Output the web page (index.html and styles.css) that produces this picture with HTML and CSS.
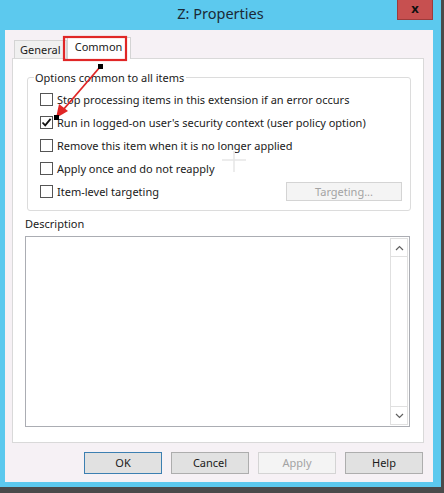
FILE: index.html
```html
<!DOCTYPE html>
<html lang="en">
<head>
  <meta charset="UTF-8">
  <title>Z: Properties</title>
  <link rel="stylesheet" href="styles.css">
</head>
<body>
  <div class="window">
    <div class="titlebar">
      <span class="title">Z: Properties</span>
      <div class="close">x</div>
    </div>

    <div class="client">
      <div class="tabs">
        <div class="tab">General</div>
        <div class="tab selected">Common</div>
      </div>

      <div class="panel">
        <fieldset class="group">
          <legend>Options common to all items</legend>
          <div class="option"><span class="check"></span><span>Stop processing items in this extension if an error occurs</span></div>
          <div class="option">
            <span class="check">
              <svg width="11" height="11" viewBox="0 0 11 11"><path d="M1.5 5.5 L4.2 8.3 L9.6 1.8" fill="none" stroke="#111" stroke-width="1.8"/></svg>
            </span>
            <span>Run in logged-on user's security context (user policy option)</span>
          </div>
          <div class="option"><span class="check"></span><span>Remove this item when it is no longer applied</span></div>
          <div class="option"><span class="check"></span><span>Apply once and do not reapply</span></div>
          <div class="option">
            <span class="check"></span><span>Item-level targeting</span>
            <div class="btn disabled targeting">Targeting...</div>
          </div>
        </fieldset>

        <div class="desc-label">Description</div>
        <div class="desc-box">
          <div class="scrollbar">
            <div class="arrow">
              <svg width="9" height="6" viewBox="0 0 9 6"><polyline points="1,5 4.5,1.5 8,5" fill="none" stroke="#606060" stroke-width="1.2"/></svg>
            </div>
            <div class="arrow">
              <svg width="9" height="6" viewBox="0 0 9 6"><polyline points="1,1 4.5,4.5 8,1" fill="none" stroke="#606060" stroke-width="1.2"/></svg>
            </div>
          </div>
        </div>
      </div>

      <div class="buttons">
        <div class="btn default">OK</div>
        <div class="btn">Cancel</div>
        <div class="btn disabled">Apply</div>
        <div class="btn">Help</div>
      </div>
    </div>

    <!-- callout drawn over the dialog -->
    <svg class="annotation" width="441" height="487" viewBox="0 0 441 487">
      <path d="M234 151 V172 M222 160 H246" stroke="#e6e6e6" stroke-width="1.5"/>
      <rect x="64" y="37" width="62" height="23" fill="none" stroke="#e02626" stroke-width="2.2"/>
      <line x1="100" y1="67" x2="63" y2="110" stroke="#e02626" stroke-width="1.8"/>
      <polygon points="56,118 59,104 68,111" fill="#e02626"/>
      <rect x="98" y="64" width="5" height="5" fill="#000"/>
      <rect x="54" y="115" width="5" height="5" fill="#000"/>
    </svg>
  </div>
</body>
</html>
```

FILE: styles.css
```css
body {
  margin: 0;
  background-color: #4a4a4a;
  font-family: "Noto Sans", "DejaVu Sans", sans-serif;
  font-size: 11px;
  color: #1a1a1a;
}
.window {
  position: relative;
  width: 441px;
  height: 487px;
  background-color: #5cc9ee;
}
.titlebar {
  position: relative;
  height: 30px;
  text-align: center;
}
.title {
  display: inline-block;
  margin-top: 3px;
  font-size: 14.5px;
  color: #1b2a36;
}
.close {
  position: absolute;
  top: 0;
  left: 397px;
  width: 36px;
  height: 20px;
  background-color: #c75050;
  border: 1px solid #9c3b3b;
  border-top: none;
  box-sizing: border-box;
  color: #111;
  font-weight: bold;
  font-size: 13px;
  line-height: 17px;
}
.client {
  margin-left: 5px;
  width: 428px;
  height: 452px;
  background-color: #f6f1f5;
  padding: 0 9px 0 7px;
  box-sizing: border-box;
}
.tabs {
  display: flex;
  align-items: flex-end;
  height: 28px;
  padding-left: 2px;
}
.tab {
  height: 18px;
  padding: 0 5px;
  box-sizing: border-box;
  border: 1px solid #d4d4d4;
  border-bottom: none;
  background-color: #f0f0f0;
  line-height: 18px;
}
.tab.selected {
  width: 64px;
  height: 22px;
  margin-bottom: -1px;
  background-color: #fff;
  line-height: 17px;
  text-align: center;
  position: relative;
}
.panel {
  height: 385px;
  background-color: #fff;
  border: 1px solid #d9d9d9;
  box-sizing: border-box;
  padding: 11px 12px 0 14px;
}
.group {
  margin: 0;
  padding: 3px 8px 9px 6px;
  border: 1px solid #dcdcdc;
  border-radius: 3px;
  height: 141px;
  box-sizing: border-box;
}
.group legend {
  padding: 0 2px 0 1px;
  line-height: 15px;
}
.option {
  display: flex;
  align-items: center;
  height: 23px;
}
.check {
  width: 13px;
  height: 13px;
  box-sizing: border-box;
  border: 1px solid #555;
  background-color: #fff;
  margin: 0 4px 0 6px;
  display: flex;
  align-items: center;
  justify-content: center;
  flex-shrink: 0;
}
.btn {
  height: 22px;
  width: 78px;
  box-sizing: border-box;
  border: 1px solid #adadad;
  background-color: #e1e1e1;
  text-align: center;
  line-height: 20px;
}
.btn.default {
  border-color: #3c7fb1;
}
.btn.disabled {
  background-color: #f4f4f4;
  border-color: #d4d4d4;
  color: #a3a3a3;
}
.targeting {
  margin-left: auto;
  width: 116px;
  height: 19px;
  line-height: 17px;
}
.desc-label {
  margin: 5px 0 0 -2px;
  line-height: 16px;
}
.desc-box {
  margin: 4px 1px 0 -2px;
  height: 191px;
  border: 1px solid #abadb3;
  box-sizing: border-box;
  display: flex;
  justify-content: flex-end;
  padding: 1px 1px 1px 0;
}
.scrollbar {
  width: 18px;
  border: 1px solid #e0e0e0;
  box-sizing: border-box;
  display: flex;
  flex-direction: column;
  justify-content: space-between;
}
.arrow {
  height: 17px;
  display: flex;
  align-items: center;
  justify-content: center;
}
.arrow:first-child {
  border-bottom: 1px solid #e0e0e0;
}
.arrow:last-child {
  border-top: 1px solid #e0e0e0;
}
.buttons {
  display: flex;
  justify-content: flex-end;
  gap: 9px;
  margin-top: 9px;
  padding-right: 1px;
}
.annotation {
  position: absolute;
  top: 0;
  left: 0;
  pointer-events: none;
}
```
